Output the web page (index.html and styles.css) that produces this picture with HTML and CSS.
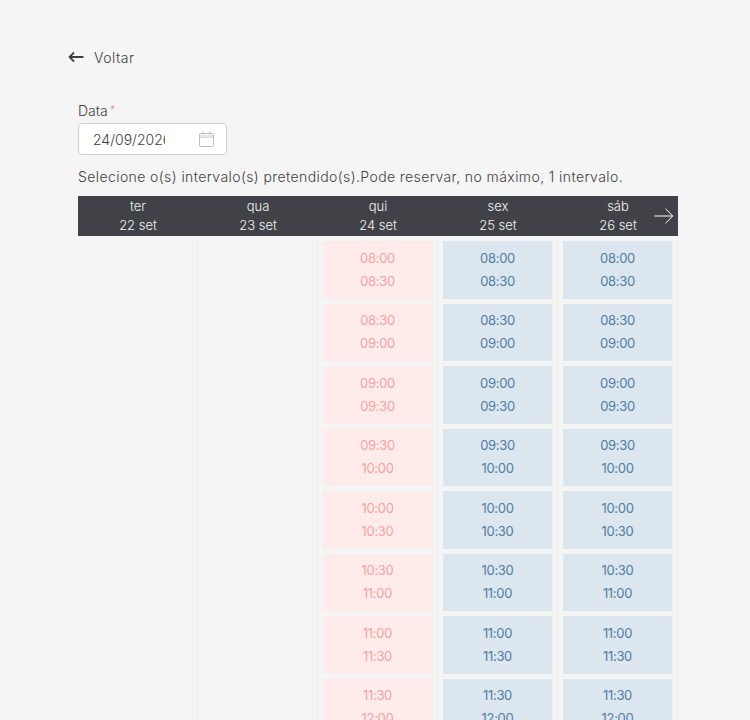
FILE: index.html
```html
<!DOCTYPE html>
<html lang="pt">
<head>
<meta charset="utf-8">
<title>Reserva</title>
<link rel="stylesheet" href="styles.css">
</head>
<body>
<main class="page">
  <a class="back" href="#">
    <svg class="back-icon" viewBox="0 0 16 12" width="16" height="12"><path d="M15.5 6H1.5M6 1.5 1.5 6 6 10.5" fill="none" stroke="#3f4045" stroke-width="1.8"/></svg>
    <span>Voltar</span>
  </a>
  <section class="form">
    <label class="label" for="data">Data<span class="req">*</span></label>
    <div class="date">
      <input class="date-input" id="data" type="text" value="24/09/2026">
      <svg class="cal" viewBox="0 0 15 16" width="15" height="16"><path d="M1.5 2.5h12a1 1 0 0 1 1 1v11a1 1 0 0 1-1 1h-12a1 1 0 0 1-1-1v-11a1 1 0 0 1 1-1ZM.5 6h14M4 .5v3M11 .5v3" fill="none" stroke="#bdbdbd" stroke-width="1"/><path d="M1 4h13v2H1z" fill="#e4e4e4"/></svg>
    </div>
    <p class="hint">Selecione o(s) intervalo(s) pretendido(s).Pode reservar, no máximo, 1 intervalo.</p>
    <div class="calendar">
      <div class="head">
        <div class="day"><span>ter</span><span>22 set</span></div>
        <div class="day"><span>qua</span><span>23 set</span></div>
        <div class="day"><span>qui</span><span>24 set</span></div>
        <div class="day"><span>sex</span><span>25 set</span></div>
        <div class="day"><span>sáb</span><span>26 set</span></div>
        <svg class="next" viewBox="0 0 20 16" width="20" height="16"><path d="M.5 8h18M11.5 .8 18.8 8l-7.3 7.2" fill="none" stroke="#fff" stroke-width="1"/></svg>
      </div>
      <div class="grid">
        <div class="col"></div>
        <div class="col"></div>
        <div class="col">
          <div class="slot busy"><span>08:00</span><span>08:30</span></div>
          <div class="slot busy"><span>08:30</span><span>09:00</span></div>
          <div class="slot busy"><span>09:00</span><span>09:30</span></div>
          <div class="slot busy"><span>09:30</span><span>10:00</span></div>
          <div class="slot busy"><span>10:00</span><span>10:30</span></div>
          <div class="slot busy"><span>10:30</span><span>11:00</span></div>
          <div class="slot busy"><span>11:00</span><span>11:30</span></div>
          <div class="slot busy"><span>11:30</span><span>12:00</span></div>
        </div>
        <div class="col">
          <div class="slot"><span>08:00</span><span>08:30</span></div>
          <div class="slot"><span>08:30</span><span>09:00</span></div>
          <div class="slot"><span>09:00</span><span>09:30</span></div>
          <div class="slot"><span>09:30</span><span>10:00</span></div>
          <div class="slot"><span>10:00</span><span>10:30</span></div>
          <div class="slot"><span>10:30</span><span>11:00</span></div>
          <div class="slot"><span>11:00</span><span>11:30</span></div>
          <div class="slot"><span>11:30</span><span>12:00</span></div>
        </div>
        <div class="col">
          <div class="slot"><span>08:00</span><span>08:30</span></div>
          <div class="slot"><span>08:30</span><span>09:00</span></div>
          <div class="slot"><span>09:00</span><span>09:30</span></div>
          <div class="slot"><span>09:30</span><span>10:00</span></div>
          <div class="slot"><span>10:00</span><span>10:30</span></div>
          <div class="slot"><span>10:30</span><span>11:00</span></div>
          <div class="slot"><span>11:00</span><span>11:30</span></div>
          <div class="slot"><span>11:30</span><span>12:00</span></div>
        </div>
      </div>
    </div>
  </section>
</main>
</body>
</html>
```
FILE: styles.css
```css
* { box-sizing: border-box; }
html, body { margin: 0; height: 720px; overflow: hidden; }
body {
  background: #f5f5f5;
  color: #3f4045;
  font-family: "Inter", "Liberation Sans", sans-serif;
  font-weight: 300;
  font-size: 14px;
}
.page { padding: 48px 72px 0 68px; }
.back {
  display: flex;
  align-items: center;
  gap: 10px;
  height: 18px;
  color: #3f4045;
  text-decoration: none;
  letter-spacing: .5px;
}
.form { margin: 34px 0 0 10px; }
.label { display: block; height: 23px; line-height: 20px; }
.req { color: #f08a8a; margin-left: 2px; font-size: 11px; vertical-align: 2px; }
.date {
  display: flex;
  align-items: center;
  justify-content: space-between;
  width: 149px;
  height: 32px;
  padding: 0 12px 0 14px;
  background: #fff;
  border: 1px solid #cfcfcf;
  border-radius: 4px;
}
.date-input {
  width: 72px;
  padding: 0;
  border: 0;
  outline: 0;
  background: none;
  color: #3f4045;
  font: inherit;
}
.hint { margin: 12px 0 0; line-height: 20px; letter-spacing: .41px; white-space: nowrap; }
.calendar { width: 600px; margin-top: 9px; }
.head { position: relative; display: flex; height: 40px; background: #414248; color: #f2f2f2; font-size: 13px; }
.day {
  display: flex;
  flex: 0 0 120px;
  flex-direction: column;
  align-items: center;
  line-height: 19px;
  padding-top: 1px;
}
.next { position: absolute; top: 12px; right: 4px; }
.grid { display: flex; padding-top: 4px; }
.col {
  display: flex;
  flex: 0 0 120px;
  flex-direction: column;
  gap: 5px;
  min-height: 480px;
  padding: 1px 5px 0;
  border-right: 1px solid #ebebeb;
}
.slot {
  display: flex;
  flex-direction: column;
  align-items: center;
  justify-content: center;
  gap: 4px;
  height: 57.5px;
  background: #dce6ef;
  color: #4f7da3;
  font-size: 13px;
  font-weight: 400;
  letter-spacing: -.3px;
  line-height: 19px;
}
.busy { background: #ffebea; color: #f5a3a3; }
```
